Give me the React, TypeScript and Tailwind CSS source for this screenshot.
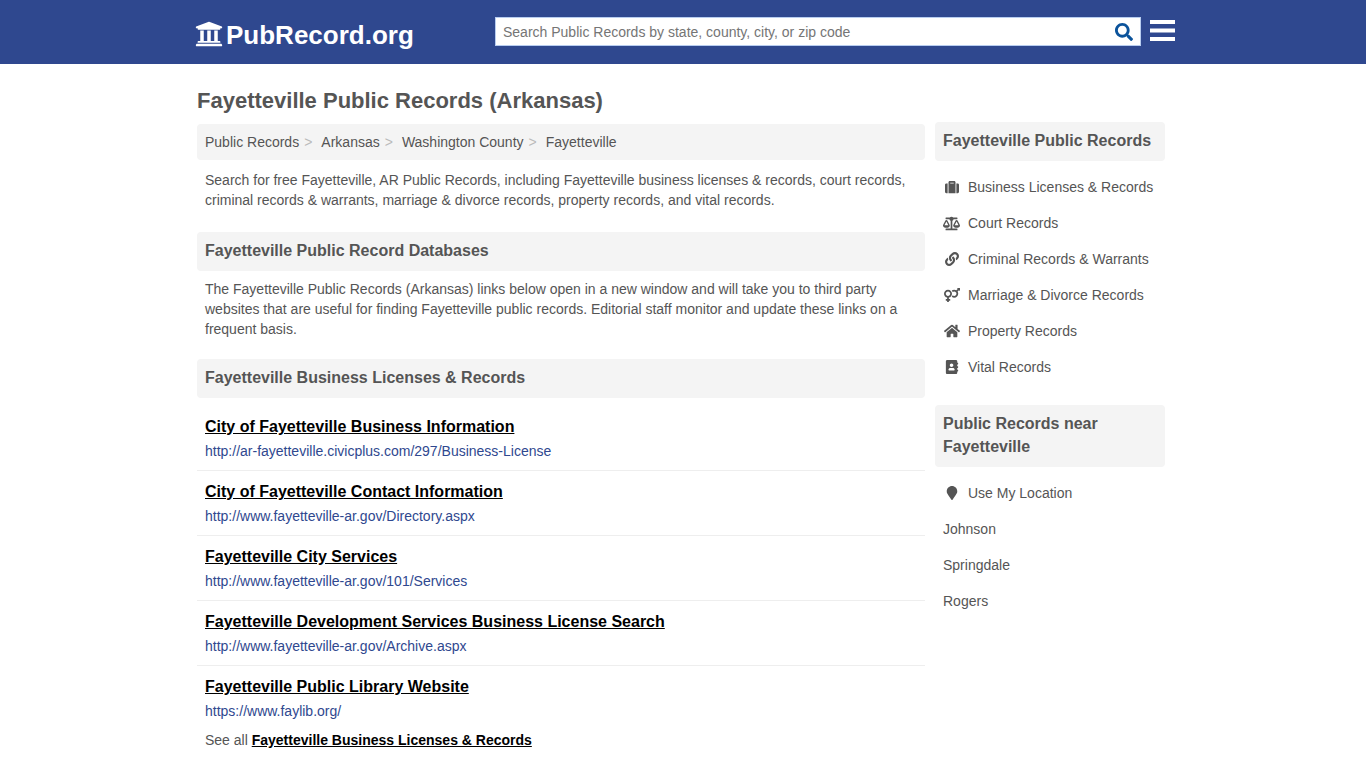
import { useState } from "react";
import {
  FaAddressBook,
  FaBalanceScale,
  FaHome,
  FaLink,
  FaMapMarker,
  FaSearch,
  FaSuitcase,
  FaUniversity,
  FaVenusMars,
} from "react-icons/fa";

const breadcrumbs = ["Public Records", "Arkansas", "Washington County", "Fayetteville"];

const licenses = [
  {
    title: "City of Fayetteville Business Information",
    url: "http://ar-fayetteville.civicplus.com/297/Business-License",
  },
  {
    title: "City of Fayetteville Contact Information",
    url: "http://www.fayetteville-ar.gov/Directory.aspx",
  },
  {
    title: "Fayetteville City Services",
    url: "http://www.fayetteville-ar.gov/101/Services",
  },
  {
    title: "Fayetteville Development Services Business License Search",
    url: "http://www.fayetteville-ar.gov/Archive.aspx",
  },
  {
    title: "Fayetteville Public Library Website",
    url: "https://www.faylib.org/",
  },
];

const categories = [
  { label: "Business Licenses & Records", icon: <FaSuitcase className="size-[14px]" /> },
  { label: "Court Records", icon: <FaBalanceScale className="size-[17px]" /> },
  { label: "Criminal Records & Warrants", icon: <FaLink className="size-[14px]" /> },
  { label: "Marriage & Divorce Records", icon: <FaVenusMars className="size-4" /> },
  { label: "Property Records", icon: <FaHome className="size-4" /> },
  { label: "Vital Records", icon: <FaAddressBook className="size-[14px]" /> },
];

const nearby = ["Johnson", "Springdale", "Rogers"];

const SectionTitle = ({ children }) => (
  <h2 className="rounded bg-[#f4f4f4] px-2 pt-[7px] pb-[9px] text-base leading-[23px] font-bold">
    {children}
  </h2>
);

// three square-ended bars
const MenuIcon = () => (
  <svg viewBox="0 0 25 21" className="h-[21px] w-[25px]" fill="currentColor" aria-hidden="true">
    <rect width="25" height="4" />
    <rect y="8.5" width="25" height="4" />
    <rect y="17" width="25" height="4" />
  </svg>
);

const Header = () => {
  const [query, setQuery] = useState("");

  return (
    <header className="bg-[#2f488f]">
      <div className="mx-auto flex h-16 max-w-[984px] items-center justify-between pl-1">
        <a href="#" className="flex items-center gap-[3px] pt-[6px] text-[26px] leading-8 font-bold text-white">
          <span className="pb-[2px]">
            <FaUniversity className="size-7" />
          </span>
          PubRecord.org
        </a>
        <div className="flex items-center gap-[9px] pb-[2px]">
          <form
            role="search"
            className="flex h-[29px] w-[646px] items-center border border-[#b8cdf0] bg-white"
            onSubmit={(e) => e.preventDefault()}
          >
            <input
              type="text"
              aria-label="Search Public Records"
              placeholder="Search Public Records by state, county, city, or zip code"
              className="h-full flex-1 px-[7px] pt-px text-sm text-[#555] placeholder:text-[#757575] focus:outline-none"
              value={query}
              onChange={(e) => setQuery(e.target.value)}
            />
            <button type="submit" aria-label="Search" className="px-[7px] pt-px text-[#0b539b]">
              <FaSearch className="size-[18px]" />
            </button>
          </form>
          <button type="button" aria-label="Menu" className="pb-px text-white">
            <MenuIcon />
          </button>
        </div>
      </div>
    </header>
  );
};

const Sidebar = () => (
  <aside className="w-[230px] shrink-0 pt-[58px]">
    <SectionTitle>Fayetteville Public Records</SectionTitle>
    <ul className="px-2 pt-2 pb-5">
      {categories.map((item) => (
        <li key={item.label}>
          <a href="#" className="flex items-center gap-2 py-2">
            <span className="flex w-[17px] justify-center">{item.icon}</span>
            {item.label}
          </a>
        </li>
      ))}
    </ul>
    <SectionTitle>Public Records near Fayetteville</SectionTitle>
    <ul className="px-2 pt-2">
      <li>
        <a href="#" className="flex items-center gap-2 py-2">
          <span className="flex w-[17px] justify-center">
            <FaMapMarker className="size-[14px]" />
          </span>
          Use My Location
        </a>
      </li>
      {nearby.map((city) => (
        <li key={city}>
          <a href="#" className="block py-2">
            {city}
          </a>
        </li>
      ))}
    </ul>
  </aside>
);

const App = () => {
  return (
    <div className="min-h-screen bg-white font-['Liberation_Sans',Arial,sans-serif] text-sm text-[#555]">
      <Header />
      <div className="mx-auto flex max-w-[972px] gap-[10px] pr-1">
        <main className="min-w-0 flex-1 pt-[21px]">
          <h1 className="pb-[7px] text-[22px] leading-8 font-bold">
            Fayetteville Public Records (Arkansas)
          </h1>
          <nav aria-label="Breadcrumb" className="rounded bg-[#f4f4f4] p-2">
            <ol className="flex">
              {breadcrumbs.map((crumb, i) => (
                <li key={crumb}>
                  <a href="#">{crumb}</a>
                  {i < breadcrumbs.length - 1 && <span className="pr-[9px] pl-[5px] text-[#bbb]">&gt;</span>}
                </li>
              ))}
            </ol>
          </nav>
          <p className="px-2 pt-[10px] pb-[22px]">
            Search for free Fayetteville, AR Public Records, including Fayetteville business licenses
            &amp; records, court records, criminal records &amp; warrants, marriage &amp; divorce
            records, property records, and vital records.
          </p>
          <SectionTitle>Fayetteville Public Record Databases</SectionTitle>
          <p className="px-2 pt-2 pb-5">
            The Fayetteville Public Records (Arkansas) links below open in a new window and will take
            you to third party websites that are useful for finding Fayetteville public records.
            Editorial staff monitor and update these links on a frequent basis.
          </p>
          <SectionTitle>Fayetteville Business Licenses &amp; Records</SectionTitle>
          <ul className="pt-2">
            {licenses.map((item) => (
              <li key={item.title} className="border-b border-[#eee] px-2 py-[9px] last:border-b-0">
                <a href={item.url} className="text-base leading-6 font-bold text-black underline">
                  {item.title}
                </a>
                <div className="pt-[2px] text-[#2f488f]">{item.url}</div>
              </li>
            ))}
          </ul>
          <p className="px-2 pb-4">
            See all{" "}
            <a href="#" className="font-bold text-black underline">
              Fayetteville Business Licenses &amp; Records
            </a>
          </p>
        </main>
        <Sidebar />
      </div>
    </div>
  );
};

export default App;
